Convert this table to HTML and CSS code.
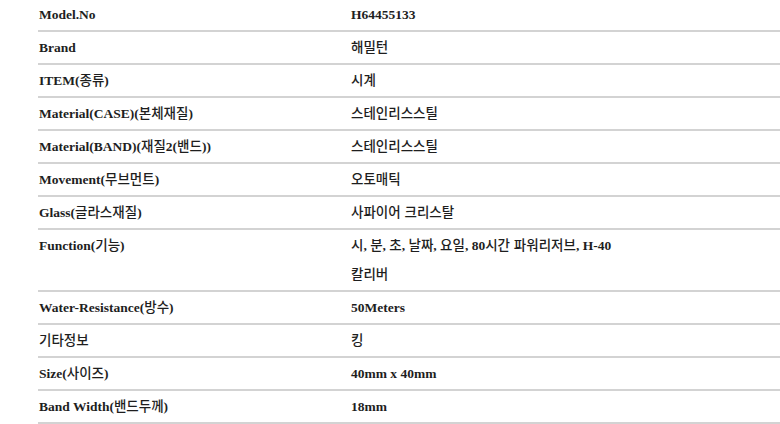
FILE: index.html
```html
<!DOCTYPE html>
<html lang="ko">
<head>
<meta charset="utf-8">
<title>Spec</title>
<link rel="stylesheet" href="styles.css">
</head>
<body>
<table class="spec">
  <colgroup><col class="c-label"><col class="c-value"></colgroup>
  <tbody>
    <tr><th>Model.No</th><td><div class="val">H64455133</div></td></tr>
    <tr><th>Brand</th><td><div class="val"><span class="ko">해밀턴</span></div></td></tr>
    <tr><th>ITEM(<span class="ko">종류</span>)</th><td><div class="val"><span class="ko">시계</span></div></td></tr>
    <tr><th>Material(CASE)(<span class="ko">본체재질</span>)</th><td><div class="val"><span class="ko">스테인리스스틸</span></div></td></tr>
    <tr><th>Material(BAND)(<span class="ko">재질</span>2(<span class="ko">밴드</span>))</th><td><div class="val"><span class="ko">스테인리스스틸</span></div></td></tr>
    <tr><th>Movement(<span class="ko">무브먼트</span>)</th><td><div class="val"><span class="ko">오토매틱</span></div></td></tr>
    <tr><th>Glass(<span class="ko">글라스재질</span>)</th><td><div class="val"><span class="ko">사파이어 크리스탈</span></div></td></tr>
    <tr><th>Function(<span class="ko">기능</span>)</th><td><div class="val"><span class="ko">시</span>, <span class="ko">분</span>, <span class="ko">초</span>, <span class="ko">날짜</span>, <span class="ko">요일</span>, 80<span class="ko">시간 파워리저브</span>, H-40 <span class="ko">칼리버</span></div></td></tr>
    <tr><th>Water-Resistance(<span class="ko">방수</span>)</th><td><div class="val">50Meters</div></td></tr>
    <tr><th><span class="ko">기타정보</span></th><td><div class="val"><span class="ko">킹</span></div></td></tr>
    <tr><th>Size(<span class="ko">사이즈</span>)</th><td><div class="val">40mm x 40mm</div></td></tr>
    <tr><th>Band Width(<span class="ko">밴드두께</span>)</th><td><div class="val">18mm</div></td></tr>
  </tbody>
</table>
</body>
</html>
```

FILE: styles.css
```css
html, body {
  margin: 0;
  padding: 0;
  background: #ffffff;
  overflow: hidden;
}

.spec {
  margin: -1px 0 0 38px;
  width: calc(100% - 38px);
  border-collapse: collapse;
  border-spacing: 0;
  table-layout: fixed;
  font-family: "Liberation Serif", "Noto Sans CJK KR", serif;
  font-size: 13.5px;
  font-weight: 700;
  color: #1e1e1e;
  word-break: keep-all;
}

.c-label {
  width: 312px;
}

.spec th,
.spec td {
  padding: 1px 0 1px 1px;
  line-height: 29px;
  text-align: left;
  vertical-align: top;
  border-bottom: 2px solid #d3d3d3;
}

.val {
  max-width: 300px;
}

.ko {
  font-family: "Noto Sans CJK KR", sans-serif;
  font-weight: 500;
  line-height: 1;
}
```
